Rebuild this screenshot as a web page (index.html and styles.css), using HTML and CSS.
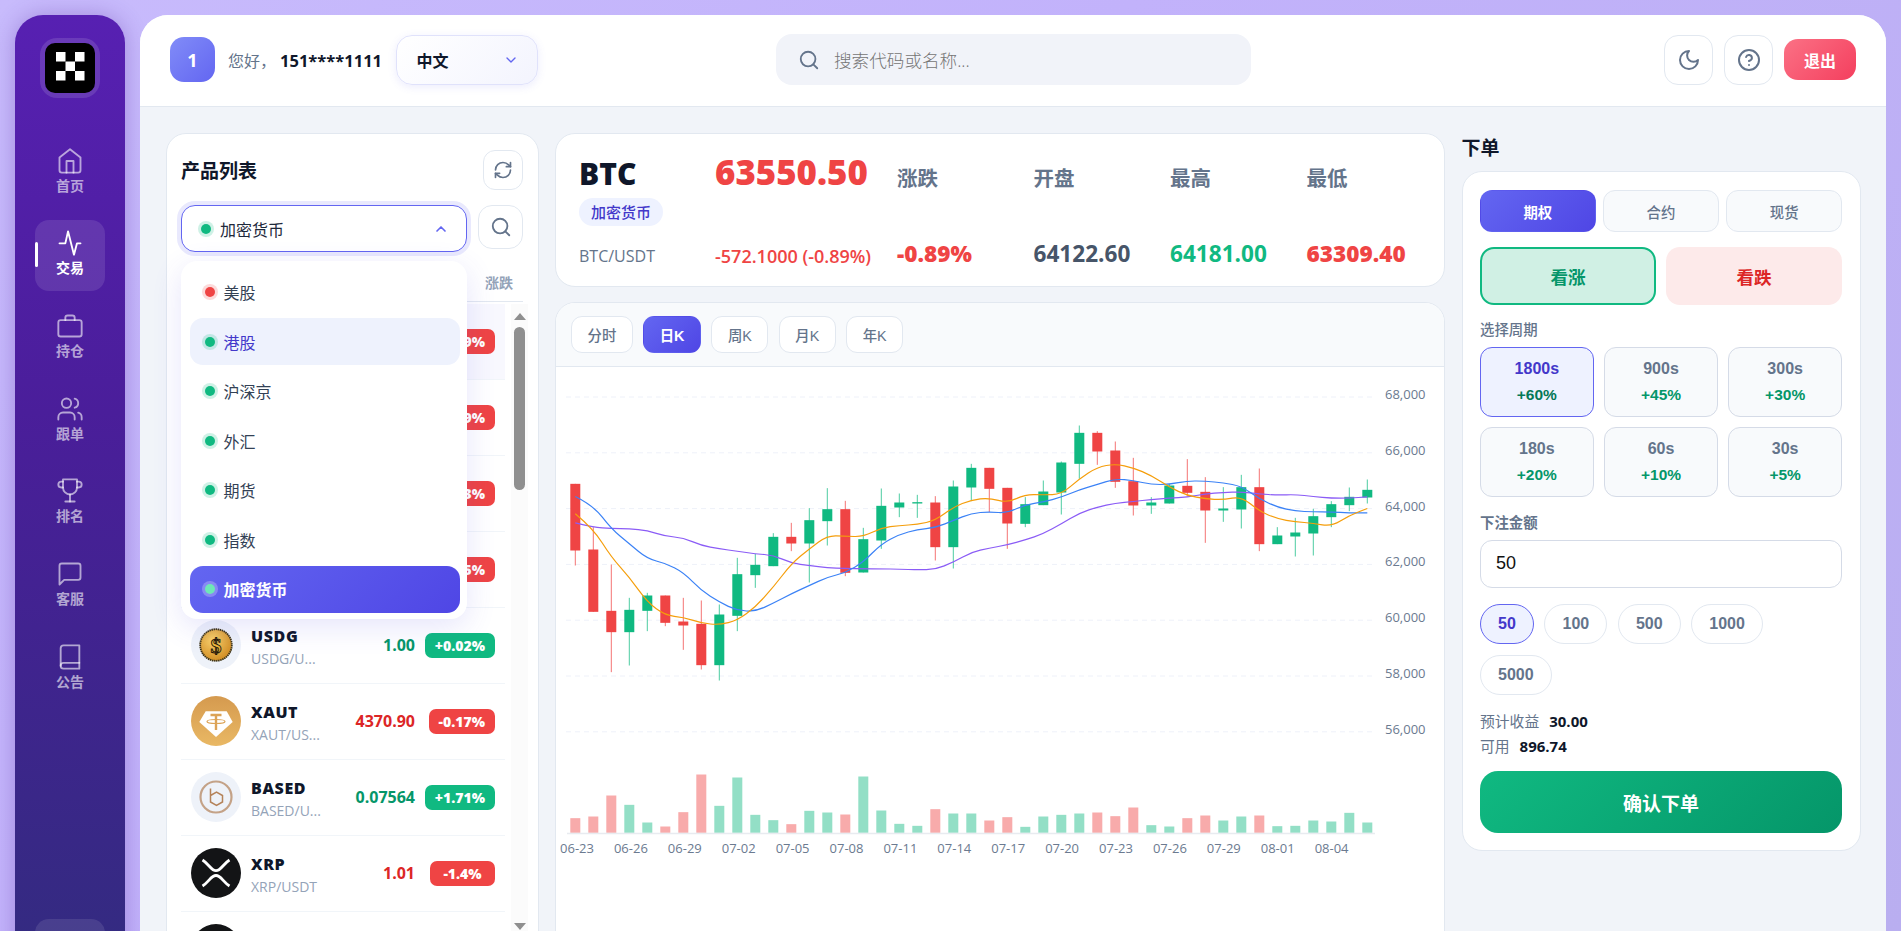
FILE: index.html
```html
<!DOCTYPE html>
<html lang="zh-CN">
<head>
    <meta charset="UTF-8">
    <meta name="viewport" content="width=device-width, initial-scale=1.0">
    <title>交易</title>
    <link rel="stylesheet" href="styles.css">
</head>
<body>
<div class="app">
    <aside class="sidebar">
        <div class="logo">
            <svg viewBox="0 0 50 50" width="50" height="50">
                <rect width="50" height="50" rx="10" fill="#000"/>
                <g fill="#fff">
                    <rect x="11" y="9" width="9.500" height="9.500"/>
                    <rect x="30" y="9" width="9.500" height="9.500"/>
                    <rect x="20.500" y="18.500" width="9.500" height="9.500"/>
                    <rect x="11" y="28" width="9.500" height="9.500"/>
                    <rect x="30" y="28" width="9.500" height="9.500"/>
                </g>
            </svg>
        </div>
        <nav class="nav">
            <a class="nav-item">
                <svg class="icon" viewBox="0 0 24 24"><path d="m3 9 9-7 9 7v11a2 2 0 0 1-2 2H5a2 2 0 0 1-2-2z"/><polyline points="9 22 9 12 15 12 15 22"/></svg>
                <span>首页</span>
            </a>
            <a class="nav-item active">
                <svg class="icon" viewBox="0 0 24 24"><path d="M3 12.300h5l2.300-10.300 5.100 20 2.600-9.700h3"/></svg>
                <span>交易</span>
            </a>
            <a class="nav-item">
                <svg class="icon" viewBox="0 0 24 24"><rect x="2" y="7" width="20" height="14" rx="2"/><path d="M16 7V5a2 2 0 0 0-2-2h-4a2 2 0 0 0-2 2v2"/></svg>
                <span>持仓</span>
            </a>
            <a class="nav-item">
                <svg class="icon" viewBox="0 0 24 24"><path d="M16 21v-2a4 4 0 0 0-4-4H6a4 4 0 0 0-4 4v2"/><circle cx="9" cy="7" r="4"/><path d="M22 21v-2a4 4 0 0 0-3-3.870"/><path d="M16 3.130a4 4 0 0 1 0 7.750"/></svg>
                <span>跟单</span>
            </a>
            <a class="nav-item">
                <svg class="icon" viewBox="0 0 24 24"><path d="M6 9H4.500a2.500 2.500 0 0 1 0-5H6"/><path d="M18 9h1.500a2.500 2.500 0 0 0 0-5H18"/><path d="M12 15v6"/><path d="M8 21h8"/><path d="M18 2H6v7a6 6 0 0 0 12 0V2Z"/></svg>
                <span>排名</span>
            </a>
            <a class="nav-item">
                <svg class="icon" viewBox="0 0 24 24"><path d="M21 15a2 2 0 0 1-2 2H7l-4 4V5a2 2 0 0 1 2-2h14a2 2 0 0 1 2 2z"/></svg>
                <span>客服</span>
            </a>
            <a class="nav-item">
                <svg class="icon" viewBox="0 0 24 24"><path d="M4 19.500A2.500 2.500 0 0 1 6.500 17H20"/><path d="M6.500 2H20v20H6.500A2.500 2.500 0 0 1 4 19.500v-15A2.500 2.500 0 0 1 6.500 2z"/></svg>
                <span>公告</span>
            </a>
        </nav>
        <div class="sidebar-foot"></div>
    </aside>

    <main class="main">
        <header class="header">
            <div class="user">
                <div class="avatar">1</div>
                <div class="greeting">您好，<b>151****1111</b></div>
                <div class="lang">
                    <span>中文</span>
                    <svg class="icon chevron" viewBox="0 0 24 24"><path d="m6 9 6 6 6-6"/></svg>
                </div>
            </div>
            <div class="search">
                <svg class="icon" viewBox="0 0 24 24"><circle cx="11" cy="11" r="8"/><path d="m21 21-4.300-4.300"/></svg>
                <span>搜索代码或名称...</span>
            </div>
            <div class="header-actions">
                <button class="icon-button"><svg class="icon" viewBox="0 0 24 24"><path d="M12 3a6 6 0 0 0 9 9 9 9 0 1 1-9-9Z"/></svg></button>
                <button class="icon-button"><svg class="icon" viewBox="0 0 24 24"><circle cx="12" cy="12" r="10"/><path d="M9.090 9a3 3 0 0 1 5.830 1c0 2-3 3-3 3"/><path d="M12 17h.01"/></svg></button>
                <button class="logout">退出</button>
            </div>
        </header>

        <div class="content">
            <section class="products">
                <div class="panel-head">
                    <h2>产品列表</h2>
                    <button class="square-button refresh">
                        <svg class="icon" viewBox="0 0 24 24"><path d="M3 12a9 9 0 0 1 9-9 9.750 9.750 0 0 1 6.740 2.740L21 8"/><path d="M21 3v5h-5"/><path d="M21 12a9 9 0 0 1-9 9 9.750 9.750 0 0 1-6.740-2.740L3 16"/><path d="M8 16H3v5"/></svg>
                    </button>
                </div>
                <div class="filter-row">
                    <div class="market-select">
                        <div class="market-current">
                            <i class="dot green"></i>
                            <span>加密货币</span>
                            <svg class="icon chevron" viewBox="0 0 24 24"><path d="m18 15-6-6-6 6"/></svg>
                        </div>
                        <ul class="market-menu">
                            <li><i class="dot red"></i>美股</li>
                            <li class="hover"><i class="dot green"></i>港股</li>
                            <li><i class="dot green"></i>沪深京</li>
                            <li><i class="dot green"></i>外汇</li>
                            <li><i class="dot green"></i>期货</li>
                            <li><i class="dot green"></i>指数</li>
                            <li class="selected"><i class="dot green"></i>加密货币</li>
                        </ul>
                    </div>
                    <button class="square-button find">
                        <svg class="icon" viewBox="0 0 24 24"><circle cx="11" cy="11" r="8"/><path d="m21 21-4.300-4.300"/></svg>
                    </button>
                </div>
                <div class="table-head">涨跌</div>
                <div class="list-wrap">
                    <div class="coin-list">
                        <div class="coin-row current"><span></span><span></span><span></span><span class="badge down">-0.89%</span></div>
                        <div class="coin-row"><span></span><span></span><span></span><span class="badge down">-0.79%</span></div>
                        <div class="coin-row"><span></span><span></span><span></span><span class="badge down">-1.13%</span></div>
                        <div class="coin-row"><span></span><span></span><span></span><span class="badge down">-0.25%</span></div>
                        <div class="coin-row">
                            <svg class="coin" viewBox="0 0 50 50">
                                <defs><radialGradient id="gold" cx="40%" cy="35%" r="70%"><stop offset="0" stop-color="#fbd26a"/><stop offset="1" stop-color="#cf8a20"/></radialGradient></defs>
                                <circle cx="25" cy="25" r="25" fill="#eef2f9"/>
                                <circle cx="25" cy="25" r="15.800" fill="url(#gold)" stroke="#3d3418" stroke-width="1.800" stroke-dasharray="1.500 0.600"/>
                                <text class="coin-sign" x="25" y="32.500" text-anchor="middle">$</text>
                            </svg>
                            <div class="coin-name"><b>USDG</b><small>USDG/U...</small></div>
                            <div class="price up">1.00</div>
                            <span class="badge up">+0.02%</span>
                        </div>
                        <div class="coin-row">
                            <svg class="coin" viewBox="0 0 50 50">
                                <defs><linearGradient id="xaut" x1="0" y1="0" x2="0" y2="1"><stop offset="0" stop-color="#d59a4f"/><stop offset="1" stop-color="#e9b864"/></linearGradient></defs>
                                <circle cx="25" cy="25" r="25" fill="url(#xaut)"/>
                                <polygon points="14.700,15.300 35.700,15.300 41.700,26 25,41 8.300,26" fill="#fff"/>
                                <path d="M19.500 19h11M25 19v15" stroke="#dca356" stroke-width="2.400" fill="none"/>
                                <ellipse cx="25" cy="25.500" rx="9" ry="2" stroke="#dca356" stroke-width="1.200" fill="none"/>
                            </svg>
                            <div class="coin-name"><b>XAUT</b><small>XAUT/US...</small></div>
                            <div class="price down">4370.90</div>
                            <span class="badge down">-0.17%</span>
                        </div>
                        <div class="coin-row">
                            <svg class="coin" viewBox="0 0 50 50">
                                <circle cx="25" cy="25" r="25" fill="#eef2f9"/>
                                <circle cx="25" cy="25" r="15.500" fill="none" stroke="#c4a287" stroke-width="2.200"/>
                                <path d="M19.500 16.500v13.500l6 3.500 6-3.500v-6.500l-6-3.500-6 3.500" fill="none" stroke="#b5835a" stroke-width="1.500"/>
                            </svg>
                            <div class="coin-name"><b>BASED</b><small>BASED/U...</small></div>
                            <div class="price up">0.07564</div>
                            <span class="badge up">+1.71%</span>
                        </div>
                        <div class="coin-row">
                            <svg class="coin" viewBox="0 0 50 50">
                                <circle cx="25" cy="25" r="25" fill="#131416"/>
                                <path d="M11.500 12C18 16 20 22.700 25 22.700S32 16 38.500 12M11.500 38C18 34 20 27.500 25 27.500S32 34 38.500 38" fill="none" stroke="#fff" stroke-width="2.800"/>
                            </svg>
                            <div class="coin-name"><b>XRP</b><small>XRP/USDT</small></div>
                            <div class="price down">1.01</div>
                            <span class="badge down">-1.4%</span>
                        </div>
                        <div class="coin-row">
                            <svg class="coin" viewBox="0 0 50 50"><circle cx="25" cy="25" r="25" fill="#131416"/></svg>
                        </div>
                    </div>
                    <div class="scrollbar">
                        <i class="arrow-up"></i>
                        <i class="thumb"></i>
                        <i class="arrow-down"></i>
                    </div>
                </div>
            </section>

            <section class="center">
                <div class="quote">
                    <div class="quote-col">
                        <div class="symbol">BTC</div>
                        <span class="tag">加密货币</span>
                        <div class="pair">BTC/USDT</div>
                    </div>
                    <div class="quote-col">
                        <div class="last">63550.50</div>
                        <div class="last-change">-572.1000 (-0.89%)</div>
                    </div>
                    <div class="quote-col stat"><label>涨跌</label><div class="red-text">-0.89%</div></div>
                    <div class="quote-col stat"><label>开盘</label><div>64122.60</div></div>
                    <div class="quote-col stat"><label>最高</label><div class="green-text">64181.00</div></div>
                    <div class="quote-col stat"><label>最低</label><div class="red-text">63309.40</div></div>
                </div>
                <div class="chart-card">
                    <div class="chart-tabs">
                        <button class="chart-tab">分时</button>
                        <button class="chart-tab active">日K</button>
                        <button class="chart-tab">周K</button>
                        <button class="chart-tab">月K</button>
                        <button class="chart-tab">年K</button>
                    </div>
                    <svg id="chart" class="chart" viewBox="0 0 888 600"></svg>
                </div>
            </section>

            <section class="order">
                <h2>下单</h2>
                <div class="order-card">
                    <div class="mode-tabs">
                        <button class="mode active">期权</button>
                        <button class="mode">合约</button>
                        <button class="mode">现货</button>
                    </div>
                    <div class="direction">
                        <button class="dir rise">看涨</button>
                        <button class="dir fall">看跌</button>
                    </div>
                    <div class="field-label">选择周期</div>
                    <div class="periods">
                        <button class="period active">1800s<em>+60%</em></button>
                        <button class="period">900s<em>+45%</em></button>
                        <button class="period">300s<em>+30%</em></button>
                        <button class="period">180s<em>+20%</em></button>
                        <button class="period">60s<em>+10%</em></button>
                        <button class="period">30s<em>+5%</em></button>
                    </div>
                    <div class="field-label amount-label">下注金额</div>
                    <input class="amount" type="text" value="50">
                    <div class="chips">
                        <button class="chip active">50</button>
                        <button class="chip">100</button>
                        <button class="chip">500</button>
                        <button class="chip">1000</button>
                        <button class="chip">5000</button>
                    </div>
                    <div class="summary"><span>预计收益</span><b>30.00</b></div>
                    <div class="summary"><span>可用</span><b>896.74</b></div>
                    <button class="confirm">确认下单</button>
                </div>
            </section>
        </div>
    </main>
</div>
<script src="chart.js"></script>
</body>
</html>
```

FILE: styles.css
```css
* {
    margin: 0;
    padding: 0;
    box-sizing: border-box;
}

html, body {
    height: 100%;
    overflow: hidden;
}

body {
    font-family: "Open Sans", "Noto Sans CJK SC", sans-serif;
    background: linear-gradient(135deg, #c8bbfc 0%, #c2b2fb 40%, #b9aef0 100%);
    color: #0f172a;
    padding: 15px;
}

button {
    font-family: "Liberation Sans", "Noto Sans CJK SC", sans-serif;
    cursor: pointer;
}

.icon {
    width: 24px;
    height: 24px;
    fill: none;
    stroke: currentColor;
    stroke-width: 2;
    stroke-linecap: round;
    stroke-linejoin: round;
}

.app {
    display: flex;
    gap: 15px;
    height: 995px;
}

/* sidebar */
.sidebar {
    width: 110px;
    flex-shrink: 0;
    display: flex;
    flex-direction: column;
    align-items: center;
    padding: 23px 0 15px;
    border-radius: 28px;
    background: linear-gradient(180deg, #5720b2 0%, #4a1e9a 40%, #312c7e 100%);
    box-shadow: 0 0 22px rgba(76, 29, 149, 0.3);
}

.logo {
    width: 60px;
    height: 60px;
    padding: 5px;
    border-radius: 17px;
    background: rgba(255, 255, 255, 0.12);
    margin-bottom: 39px;
}

.logo svg {
    display: block;
}

.nav {
    display: flex;
    flex-direction: column;
    gap: 11.700px;
}

.nav-item {
    position: relative;
    width: 70px;
    height: 71px;
    display: flex;
    flex-direction: column;
    align-items: center;
    padding-top: 9.500px;
    border-radius: 14px;
    color: rgba(255, 255, 255, 0.6);
    font-size: 14px;
    font-weight: 600;
    line-height: 22px;
}

.nav-item .icon {
    width: 28px;
    height: 28px;
    stroke-width: 1.600;
    flex-shrink: 0;
}

.nav-item.active {
    background: rgba(255, 255, 255, 0.11);
    color: #fff;
    font-weight: 700;
}

.nav-item.active::before {
    content: "";
    position: absolute;
    left: 0;
    top: 22.500px;
    width: 3px;
    height: 25px;
    border-radius: 2px;
    background: #fff;
}

.sidebar-foot {
    width: 70px;
    height: 76px;
    margin-top: auto;
    border-radius: 14px;
    background: rgba(255, 255, 255, 0.1);
}

/* main */
.main {
    flex: 1;
    min-width: 0;
    display: flex;
    flex-direction: column;
    border-radius: 28px 28px 0 0;
    background: #f1f4f9;
    overflow: hidden;
}

.header {
    display: flex;
    justify-content: space-between;
    align-items: center;
    flex-shrink: 0;
    height: 92px;
    padding: 0 30px 2px;
    background: #fff;
    border-bottom: 1px solid #e2e8f0;
}

.user {
    display: flex;
    align-items: center;
    width: 606px;
}

.avatar {
    width: 45px;
    height: 45px;
    display: flex;
    align-items: center;
    justify-content: center;
    border-radius: 14px;
    background: linear-gradient(135deg, #818cf8, #6366f1);
    color: #fff;
    font-size: 18px;
    font-weight: 700;
    margin-right: 13px;
}

.greeting {
    color: #64748b;
    font-size: 16px;
    margin-right: 13.500px;
    white-space: nowrap;
}

.greeting b {
    color: #0f172a;
    font-size: 16.500px;
    font-weight: 700;
    margin-left: 4px;
}

.lang {
    width: 142px;
    height: 50px;
    display: flex;
    align-items: center;
    justify-content: space-between;
    padding: 0 18px 0 20px;
    border: 1.500px solid #e0e2fb;
    border-radius: 16px;
    background: linear-gradient(135deg, #fff, #f3f4fe);
    box-shadow: 0 2px 8px rgba(99, 102, 241, 0.12);
    font-size: 16px;
    font-weight: 700;
}

.lang .chevron {
    width: 16px;
    height: 16px;
    color: #6366f1;
}

.search {
    width: 475px;
    height: 51px;
    flex-shrink: 0;
    display: flex;
    align-items: center;
    gap: 14px;
    padding: 0 22px;
    border-radius: 16px;
    background: #f1f3f9;
    color: #757575;
    font-size: 17.600px;
    font-weight: 300;
}

.search .icon {
    color: #64748b;
    width: 22px;
    height: 22px;
}

.header-actions {
    display: flex;
    align-items: center;
    gap: 11px;
    width: 605px;
    justify-content: flex-end;
}

.icon-button {
    width: 49px;
    height: 50px;
    display: flex;
    align-items: center;
    justify-content: center;
    background: #fff;
    border: 1.500px solid #e2e8f0;
    border-radius: 14px;
    color: #64748b;
}

.logout {
    width: 72px;
    height: 41px;
    border: none;
    border-radius: 14px;
    background: linear-gradient(135deg, #fb7185, #f43f5e);
    color: #fff;
    font-size: 16px;
    font-weight: 700;
}

.content {
    flex: 1;
    min-height: 0;
    display: grid;
    grid-template-columns: 373px 1fr 399px;
    gap: 16.500px;
    padding: 25.500px 25.500px 0;
}

h2 {
    font-size: 19px;
    font-weight: 700;
    line-height: 1.3;
}

/* product list */
.products {
    background: #fff;
    border: 1px solid #e2e8f0;
    border-radius: 20px;
    padding: 16.500px 14.500px 0;
}

.panel-head {
    display: flex;
    justify-content: space-between;
    align-items: center;
    margin-bottom: 15px;
}

.panel-head h2 {
    margin-top: 3px;
}

.square-button {
    display: flex;
    align-items: center;
    justify-content: center;
    background: #fff;
    border: 1.500px solid #e2e8f0;
    color: #64748b;
}

.refresh {
    width: 40px;
    height: 40px;
    border-radius: 12px;
}

.refresh .icon {
    width: 20px;
    height: 20px;
}

.find {
    width: 45px;
    height: 44px;
    border-radius: 14px;
}

.find .icon {
    width: 22px;
    height: 22px;
}

.filter-row {
    display: flex;
    align-items: flex-start;
    gap: 11px;
    position: relative;
}

.market-select {
    position: relative;
    flex: 1;
}

.market-current {
    height: 47px;
    display: flex;
    align-items: center;
    padding: 0 17px 0 19px;
    background: #fff;
    border: 1.500px solid #6366f1;
    border-radius: 14px;
    box-shadow: 0 0 0 4px rgba(99, 102, 241, 0.14);
    color: #1e293b;
    font-size: 16px;
}

.market-current .dot {
    margin-right: 9px;
}

.market-current .chevron {
    width: 16px;
    height: 16px;
    margin-left: auto;
    color: #6366f1;
    stroke-width: 2.500;
}

.dot {
    display: inline-block;
    flex-shrink: 0;
    width: 10px;
    height: 10px;
    border-radius: 50%;
}

.dot.green {
    background: #10b981;
    box-shadow: 0 0 0 3px rgba(16, 185, 129, 0.2);
}

.dot.red {
    background: #ef4444;
    box-shadow: 0 0 0 3px rgba(239, 68, 68, 0.2);
}

.market-menu {
    position: absolute;
    top: calc(100% + 8.500px);
    left: 0;
    right: 0;
    z-index: 10;
    list-style: none;
    display: flex;
    flex-direction: column;
    gap: 2.500px;
    padding: 8px 7px 6px 8.500px;
    background: #fff;
    border-radius: 16px;
    box-shadow: 0 8px 30px rgba(79, 70, 229, 0.14);
}

.market-menu li {
    height: 47px;
    display: flex;
    align-items: center;
    gap: 9px;
    padding: 0 15px;
    border-radius: 13px;
    color: #334155;
    font-size: 16px;
}

.market-menu li.hover {
    background: #eef2fd;
    color: #4338ca;
}

.market-menu li.selected {
    background: linear-gradient(135deg, #6366f1, #4f46e5);
    color: #fff;
    font-weight: 700;
}

.market-menu li.selected .dot {
    background: #6ee7b7;
    box-shadow: 0 0 0 3px rgba(255, 255, 255, 0.25);
}

.table-head {
    height: 50px;
    padding: 20px 10px 0 0;
    border-bottom: 1px solid #e2e8f0;
    text-align: right;
    color: #94a3b8;
    font-size: 14px;
    font-weight: 600;
}

.list-wrap {
    display: flex;
    height: 630px;
    margin: 1.500px -5px 0 0;
}

.coin-list {
    width: 324px;
    overflow: hidden;
}

.coin-row {
    height: 76px;
    display: grid;
    grid-template-columns: 50px 1fr auto 80px;
    align-items: center;
    column-gap: 10px;
    padding: 0 10px;
    border-bottom: 1px solid #f1f5f9;
}

.coin-row.current {
    background: #f8f8fe;
}

.coin-row .price {
    margin-right: -10px;
}

.coin {
    width: 50px;
    height: 50px;
}

.coin-sign {
    font-family: "Liberation Serif", serif;
    font-size: 22px;
    font-weight: 700;
    fill: #f3b73a;
    stroke: #1f1808;
    stroke-width: 0.900;
}

.coin-name {
    min-width: 0;
    padding-top: 5px;
}

.coin-name b {
    display: block;
    font-size: 16px;
    font-weight: 800;
    letter-spacing: 0.600px;
    line-height: 22px;
}

.coin-name small {
    display: block;
    white-space: nowrap;
    color: #94a3b8;
    font-size: 14px;
    line-height: 22px;
    margin-top: 1px;
}

.price {
    font-size: 16px;
    font-weight: 700;
    text-align: right;
}

.price.up {
    color: #059669;
}

.price.down {
    color: #dc2626;
}

.badge {
    justify-self: end;
    min-width: 65px;
    height: 25px;
    line-height: 25px;
    padding: 0 10px;
    border-radius: 7px;
    color: #fff;
    font-size: 14px;
    font-weight: 800;
    text-align: center;
}

.badge.up {
    background: #10b981;
}

.badge.down {
    background: #ef4444;
}

.scrollbar {
    width: 17px;
    margin-left: 6px;
    display: flex;
    flex-direction: column;
    align-items: center;
    padding: 9px 0 4px;
    background: #fbfbfb;
}

.thumb {
    width: 11px;
    height: 163px;
    margin-top: 7px;
    border-radius: 6px;
    background: #8f8f8f;
}

.arrow-up {
    border: 6.500px solid transparent;
    border-top: 0;
    border-bottom: 7px solid #8f8f8f;
}

.arrow-down {
    margin-top: auto;
    border: 6.500px solid transparent;
    border-bottom: 0;
    border-top: 7px solid #8f8f8f;
}

/* quote + chart */
.center {
    display: flex;
    flex-direction: column;
    gap: 15.500px;
    min-width: 0;
}

.quote {
    display: grid;
    grid-template-columns: 136px 182px repeat(4, 136.500px);
    height: 154px;
    padding: 19px 22px 19px 23px;
    background: #fff;
    border: 1px solid #e2e8f0;
    border-radius: 20px;
}

.quote-col {
    display: flex;
    flex-direction: column;
    align-items: flex-start;
}

.symbol {
    font-size: 30px;
    font-weight: 800;
    line-height: 42px;
}

.tag {
    height: 28px;
    line-height: 28px;
    margin-top: 3.500px;
    padding: 0 12px;
    border-radius: 14px;
    background: #eef2ff;
    color: #4338ca;
    font-size: 15px;
    font-weight: 500;
}

.pair {
    color: #64748b;
    font-size: 16px;
    line-height: 24px;
    margin: auto 0 -1.500px;
}

.last {
    color: #ef4444;
    font-size: 34.800px;
    font-weight: 800;
    line-height: 42px;
    margin-top: -1.500px;
}

.last-change {
    color: #ef4444;
    font-size: 18px;
    font-weight: 600;
    line-height: 24px;
    margin: auto 0 -1px;
    white-space: nowrap;
}

.stat {
    font-size: 22.600px;
    font-weight: 700;
    color: #475569;
}

.stat label {
    color: #64748b;
    font-size: 20.500px;
    font-weight: 700;
    line-height: 30px;
    margin-top: 10px;
}

.stat div {
    line-height: 28px;
    margin: auto 0 -1.500px;
}

.stat .red-text {
    color: #ef4444;
    font-weight: 800;
}

.green-text {
    color: #10b981;
}

.chart-card {
    flex: 1;
    min-height: 0;
    background: #fff;
    border: 1px solid #e2e8f0;
    border-radius: 20px;
    overflow: hidden;
}

.chart-tabs {
    height: 63.500px;
    display: flex;
    align-items: center;
    gap: 10.400px;
    padding: 0 15px;
    background: #f8fafc;
    border-bottom: 1px solid #e2e8f0;
}

.chart-tab {
    height: 37px;
    padding: 0 15.500px;
    background: #fff;
    border: 1.500px solid #e2e8f0;
    border-radius: 11px;
    color: #64748b;
    font-size: 14.400px;
    font-weight: 500;
}

.chart-tab.active {
    background: linear-gradient(135deg, #6366f1, #4f46e5);
    border-color: transparent;
    color: #fff;
    font-weight: 700;
}

.chart {
    display: block;
    width: 888px;
    height: 600px;
    margin-left: 1px;
}

.chart text {
    font-size: 13px;
    fill: #6b7a90;
}

/* order form */
.order {
    align-self: start;
}

.order h2 {
    line-height: 26px;
    margin: 2px 0 10.500px;
}

.order-card {
    padding: 18px 17.500px 17px;
    background: #fff;
    border: 1px solid #e2e8f0;
    border-radius: 20px;
}

.mode-tabs {
    display: grid;
    grid-template-columns: repeat(3, 1fr);
    gap: 7.500px;
}

.mode {
    height: 42px;
    background: #f8fafc;
    border: 1.500px solid #e2e8f0;
    border-radius: 12px;
    color: #64748b;
    font-size: 14.400px;
    font-weight: 500;
}

.mode.active {
    background: linear-gradient(135deg, #6366f1, #4f46e5);
    border-color: transparent;
    color: #fff;
    font-weight: 700;
}

.direction {
    display: grid;
    grid-template-columns: 1fr 1fr;
    gap: 10px;
    margin-top: 15px;
}

.dir {
    height: 58px;
    border: 2px solid transparent;
    border-radius: 14px;
    font-size: 17.600px;
    font-weight: 700;
}

.dir.rise {
    background: #d0f0e4;
    border-color: #10b981;
    color: #059669;
}

.dir.fall {
    background: #fdeaea;
    color: #dc2626;
}

.field-label {
    color: #64748b;
    font-size: 14.400px;
    font-weight: 500;
    line-height: 20px;
    margin-top: 15px;
}

.periods {
    display: grid;
    grid-template-columns: repeat(3, 1fr);
    gap: 10.500px;
    margin-top: 7px;
}

.period {
    height: 69.500px;
    background: #f8fafc;
    border: 1.500px solid #d5dbe7;
    border-radius: 12px;
    color: #64748b;
    font-size: 16px;
    font-weight: 700;
    line-height: 22px;
}

.period em {
    display: block;
    margin-top: 3.500px;
    color: #059669;
    font-size: 15.500px;
    font-style: normal;
}

.period.active {
    background: #eef2ff;
    border-color: #6366f1;
    color: #4338ca;
}

.period.active em {
    color: #047857;
}

.amount-label {
    margin-top: 16px;
    font-weight: 600;
}

.amount {
    display: block;
    width: 100%;
    height: 48.500px;
    margin-top: 7px;
    padding: 0 15px;
    border: 1.500px solid #d5dbe7;
    border-radius: 12px;
    font-family: "Liberation Sans", sans-serif;
    font-size: 18px;
    color: #111;
    outline: none;
}

.chips {
    display: flex;
    flex-wrap: wrap;
    gap: 10.700px;
    margin-top: 15.500px;
}

.chip {
    height: 40.500px;
    padding: 0 17px;
    background: #fff;
    border: 1.500px solid #e2e8f0;
    border-radius: 20px;
    color: #64748b;
    font-size: 16px;
    font-weight: 700;
}

.chip.active {
    background: #eef2ff;
    border-color: #6366f1;
    color: #4338ca;
}

.summary {
    display: flex;
    gap: 10px;
    align-items: center;
    color: #64748b;
    font-size: 14.800px;
    line-height: 25px;
}

.chips + .summary {
    margin-top: 14px;
}

.summary b {
    color: #0f172a;
    font-size: 15px;
}

.confirm {
    display: block;
    width: 100%;
    height: 62px;
    margin-top: 12px;
    border: none;
    border-radius: 18px;
    background: linear-gradient(135deg, #10b981, #059669);
    color: #fff;
    font-size: 19px;
    font-weight: 700;
}
```

FILE: chart.js
```js
// [wickTop, bodyTop, bodyBottom, wickBottom, up?]
const candles = [
    [310, 310, 510, 555, 0], [440, 507, 694, 694, 0], [552, 691, 755, 875, 0], [652, 688, 755, 855, 1],
    [637, 645, 691, 752, 1], [645, 645, 727, 737, 0], [652, 723, 735, 808, 0], [660, 730, 854, 867, 0],
    [672, 702, 854, 900, 1], [532, 581, 706, 752, 1], [520, 553, 584, 622, 1], [458, 469, 557, 557, 1],
    [427, 469, 489, 512, 0], [383, 419, 489, 606, 1], [323, 386, 422, 495, 1], [361, 386, 577, 587, 0],
    [442, 476, 576, 576, 1], [324, 376, 480, 505, 1], [339, 366, 381, 410, 1], [343, 365, 369, 412, 1],
    [347, 366, 500, 540, 0], [300, 318, 500, 564, 1], [250, 262, 321, 362, 1], [262, 262, 325, 395, 0],
    [322, 322, 429, 505, 0], [350, 371, 430, 440, 1], [300, 333, 374, 374, 1], [243, 246, 336, 402, 1],
    [135, 157, 250, 295, 1], [152, 157, 213, 253, 0], [183, 210, 304, 322, 0], [232, 302, 375, 405, 0],
    [350, 366, 375, 400, 1], [310, 315, 369, 369, 1], [236, 316, 337, 348, 0], [290, 334, 390, 487, 0],
    [320, 384, 390, 424, 1], [283, 320, 387, 444, 1], [264, 320, 491, 512, 0], [440, 465, 491, 491, 1],
    [412, 456, 468, 528, 1], [385, 407, 459, 525, 1], [362, 371, 410, 440, 1], [321, 349, 374, 392, 1],
    [297, 328, 351, 369, 1]
];

const ma5 = [348, 375, 445, 490, 535, 548, 575, 630, 665, 690, 693, 668, 640, 615, 590, 577, 545, 490, 462, 447, 442, 420, 398, 394, 398, 372, 365, 350, 328, 312, 295, 300, 312, 312, 301, 302, 307, 317, 355, 380, 392, 394, 394, 397, 397];
const ma10 = [400, 445, 530, 590, 665, 705, 710, 728, 733, 720, 680, 620, 550, 505, 465, 467, 469, 442, 435, 432, 420, 380, 358, 352, 367, 342, 343, 342, 295, 260, 250, 262, 285, 320, 345, 355, 358, 348, 392, 415, 424, 428, 438, 405, 384];
const ma20 = [427, 440, 444, 445, 450, 467, 472, 495, 505, 512, 520, 524, 548, 555, 562, 564, 565, 565, 566, 568, 567, 545, 515, 503, 493, 478, 460, 430, 398, 380, 368, 363, 357, 353, 350, 340, 336, 334, 340, 344, 342, 348, 353, 353, 349];

const volumeTops = [413, 408, 345, 373, 426, 438, 395, 282, 376, 291, 403, 419, 431, 391, 396, 402, 288, 390, 430, 436, 386, 399, 399, 420, 410, 439, 408, 403, 399, 396, 407, 381, 434, 438, 413, 405, 420, 408, 405, 437, 436, 420, 423, 397, 426];

const priceAxis = ['68,000', '66,000', '64,000', '62,000', '60,000', '58,000', '56,000'];
const dates = ['06-23', '06-26', '06-29', '07-02', '07-05', '07-08', '07-11', '07-14', '07-17', '07-20', '07-23', '07-26', '07-29', '08-01', '08-04'];

const RED = '#ef4444';
const GREEN = '#10b981';

const svg = document.getElementById('chart');
const xAt = i => 18.3 + 18 * i;
const yPrice = v => 13.5 + v / 3;
const yVol = v => 313.5 + v / 3;

function add(tag, attrs, text) {
    const el = document.createElementNS('http://www.w3.org/2000/svg', tag);
    Object.keys(attrs).forEach(k => el.setAttribute(k, attrs[k]));
    if (text) el.textContent = text;
    svg.appendChild(el);
}

priceAxis.forEach((label, i) => {
    const y = 30 + 55.8 * i;
    add('line', { x1: 9, x2: 818, y1: y, y2: y, stroke: '#eef1f9', 'stroke-dasharray': '5 4' });
    add('text', { x: 868.5, y: y + 2, 'text-anchor': 'end' }, label);
});

candles.forEach((c, i) => {
    const x = xAt(i);
    const color = c[4] ? GREEN : RED;
    add('line', { x1: x, x2: x, y1: yPrice(c[0]), y2: yPrice(c[3]), stroke: color, 'stroke-opacity': 0.75 });
    add('rect', { x: x - 5, y: yPrice(c[1]), width: 10, height: (c[2] - c[1]) / 3, fill: color });
    const top = yVol(volumeTops[i]);
    add('rect', { x: x - 5, y: top, width: 10, height: yVol(457) - top, fill: color, 'fill-opacity': 0.45 });
});

// midpoint smoothing, same look as the chart lib's smooth lines
function smooth(values) {
    let d = 'M' + xAt(0) + ' ' + yPrice(values[0]);
    for (let i = 1; i < values.length - 1; i++) {
        const mx = (xAt(i) + xAt(i + 1)) / 2;
        const my = (yPrice(values[i]) + yPrice(values[i + 1])) / 2;
        d += ' Q' + xAt(i) + ' ' + yPrice(values[i]) + ' ' + mx + ' ' + my;
    }
    return d + ' L' + xAt(values.length - 1) + ' ' + yPrice(values[values.length - 1]);
}

add('path', { d: smooth(ma20), fill: 'none', stroke: '#8b5cf6', 'stroke-width': 1.2 });
add('path', { d: smooth(ma5), fill: 'none', stroke: '#3b82f6', 'stroke-width': 1.2 });
add('path', { d: smooth(ma10), fill: 'none', stroke: '#f59e0b', 'stroke-width': 1.2 });

add('line', { x1: 10, x2: 818, y1: 466.5, y2: 466.5, stroke: '#e8ebf0', 'stroke-width': 1.5 });

dates.forEach((label, i) => {
    add('text', { x: 20 + 53.9 * i, y: 486, 'text-anchor': 'middle' }, label);
});
```
